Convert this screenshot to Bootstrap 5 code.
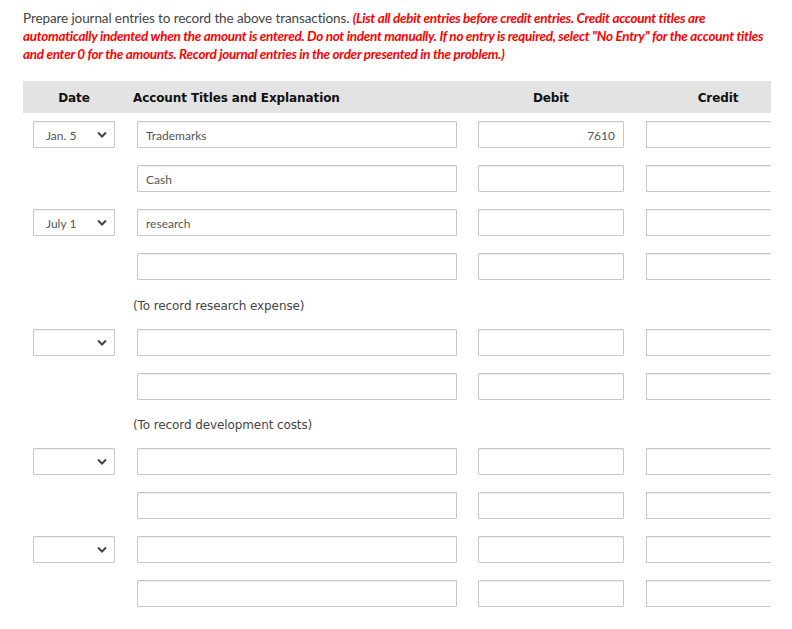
<!DOCTYPE html>
<html lang="en">
<head>
<meta charset="utf-8">
<title>Journal entries</title>
<link href="https://cdn.jsdelivr.net/npm/bootstrap@5.3.0/dist/css/bootstrap.min.css" rel="stylesheet">
<style>
html,body{height:100%;overflow:hidden;background:#fff}
.sheet{padding:9px 21px 0 23px;font-family:Lato,sans-serif}
.prompt{font-size:13.5px;line-height:18px;color:#444;margin:0 0 19px;height:53px;letter-spacing:-.1px;white-space:nowrap}
.prompt em{color:#f00;font-weight:700;letter-spacing:-.29px}
.headbar{background:#e3e3e3;height:32px;font-family:"DejaVu Sans",sans-serif;font-size:12px;letter-spacing:-.1px;font-weight:700;color:#111;align-items:center;margin-bottom:8px;padding-top:1px}
.c-date{width:114px;flex:none;padding-left:10px}
.c-acct{width:320px;flex:none;margin-right:21px}
.c-deb{width:146px;flex:none;margin-right:22px}
.c-cre{width:125px;flex:none}
.h-date{width:102px;flex:none;text-align:center}
.h-acct{width:345px;flex:none;margin-left:8px}
.h-deb{width:146px;flex:none;margin-right:22px;text-align:center}
.h-cre{width:125px;flex:none;text-align:center;padding-left:19px}
.entry{height:27px;margin-bottom:17px}
.entry .form-control,.entry .form-select{height:27px;min-height:27px;border:1px solid #c8c8c8;border-radius:1px;font-family:Lato,sans-serif;font-size:12px;color:#555;padding:2px 8px 0;box-shadow:inset 0 1px 1px #eee;background-color:#fff}
.entry .form-select{width:82px;padding:2px 0 0 12px;background-image:none}
.selbox{position:relative;width:82px}
.selbox svg{position:absolute;right:8px;top:10px;width:10px;height:7px;pointer-events:none}
.entry .amt{text-align:right}
.entry .open-r{border-right:0}
.memo{font-family:"DejaVu Sans",sans-serif;font-size:12px;letter-spacing:-.1px;color:#444;height:31px;line-height:16px;margin:0 0 0 110px}
.memo-first{height:32px;padding-top:1px}
</style>
</head>
<body>
<div class="sheet">
<p class="prompt">Prepare journal entries to record the above transactions. <em>(List all debit entries before credit entries. Credit account titles are</em><br><em>automatically indented when the amount is entered. Do not indent manually. If no entry is required, select "No Entry" for the account titles</em><br><em>and enter 0 for the amounts. Record journal entries in the order presented in the problem.)</em></p>
<div class="headbar d-flex">
<div class="h-date">Date</div><div class="h-acct">Account Titles and Explanation</div><div class="h-deb">Debit</div><div class="h-cre">Credit</div>
</div>
<div class="entry d-flex"><div class="c-date"><div class="selbox"><select class="form-select"><option>Jan. 5</option></select><svg viewBox="0 0 10 7"><path d="M1 1.5 5 5.5 9 1.5" fill="none" stroke="#444" stroke-width="2"/></svg></div></div><div class="c-acct"><input class="form-control" value="Trademarks"></div><div class="c-deb"><input class="form-control amt" value="7610"></div><div class="c-cre"><input class="form-control open-r"></div></div>
<div class="entry d-flex"><div class="c-date"></div><div class="c-acct"><input class="form-control" value="Cash"></div><div class="c-deb"><input class="form-control amt"></div><div class="c-cre"><input class="form-control open-r"></div></div>
<div class="entry d-flex"><div class="c-date"><div class="selbox"><select class="form-select"><option>July 1</option></select><svg viewBox="0 0 10 7"><path d="M1 1.5 5 5.5 9 1.5" fill="none" stroke="#444" stroke-width="2"/></svg></div></div><div class="c-acct"><input class="form-control" value="research"></div><div class="c-deb"><input class="form-control amt"></div><div class="c-cre"><input class="form-control open-r"></div></div>
<div class="entry d-flex"><div class="c-date"></div><div class="c-acct"><input class="form-control"></div><div class="c-deb"><input class="form-control amt"></div><div class="c-cre"><input class="form-control open-r"></div></div>
<div class="memo memo-first">(To record research expense)</div>
<div class="entry d-flex"><div class="c-date"><div class="selbox"><select class="form-select"><option></option></select><svg viewBox="0 0 10 7"><path d="M1 1.5 5 5.5 9 1.5" fill="none" stroke="#444" stroke-width="2"/></svg></div></div><div class="c-acct"><input class="form-control"></div><div class="c-deb"><input class="form-control amt"></div><div class="c-cre"><input class="form-control open-r"></div></div>
<div class="entry d-flex"><div class="c-date"></div><div class="c-acct"><input class="form-control"></div><div class="c-deb"><input class="form-control amt"></div><div class="c-cre"><input class="form-control open-r"></div></div>
<div class="memo">(To record development costs)</div>
<div class="entry d-flex"><div class="c-date"><div class="selbox"><select class="form-select"><option></option></select><svg viewBox="0 0 10 7"><path d="M1 1.5 5 5.5 9 1.5" fill="none" stroke="#444" stroke-width="2"/></svg></div></div><div class="c-acct"><input class="form-control"></div><div class="c-deb"><input class="form-control amt"></div><div class="c-cre"><input class="form-control open-r"></div></div>
<div class="entry d-flex"><div class="c-date"></div><div class="c-acct"><input class="form-control"></div><div class="c-deb"><input class="form-control amt"></div><div class="c-cre"><input class="form-control open-r"></div></div>
<div class="entry d-flex"><div class="c-date"><div class="selbox"><select class="form-select"><option></option></select><svg viewBox="0 0 10 7"><path d="M1 1.5 5 5.5 9 1.5" fill="none" stroke="#444" stroke-width="2"/></svg></div></div><div class="c-acct"><input class="form-control"></div><div class="c-deb"><input class="form-control amt"></div><div class="c-cre"><input class="form-control open-r"></div></div>
<div class="entry d-flex"><div class="c-date"></div><div class="c-acct"><input class="form-control"></div><div class="c-deb"><input class="form-control amt"></div><div class="c-cre"><input class="form-control open-r"></div></div>
</div>
<script src="https://cdn.jsdelivr.net/npm/bootstrap@5.3.0/dist/js/bootstrap.bundle.min.js"></script>
</body>
</html>
